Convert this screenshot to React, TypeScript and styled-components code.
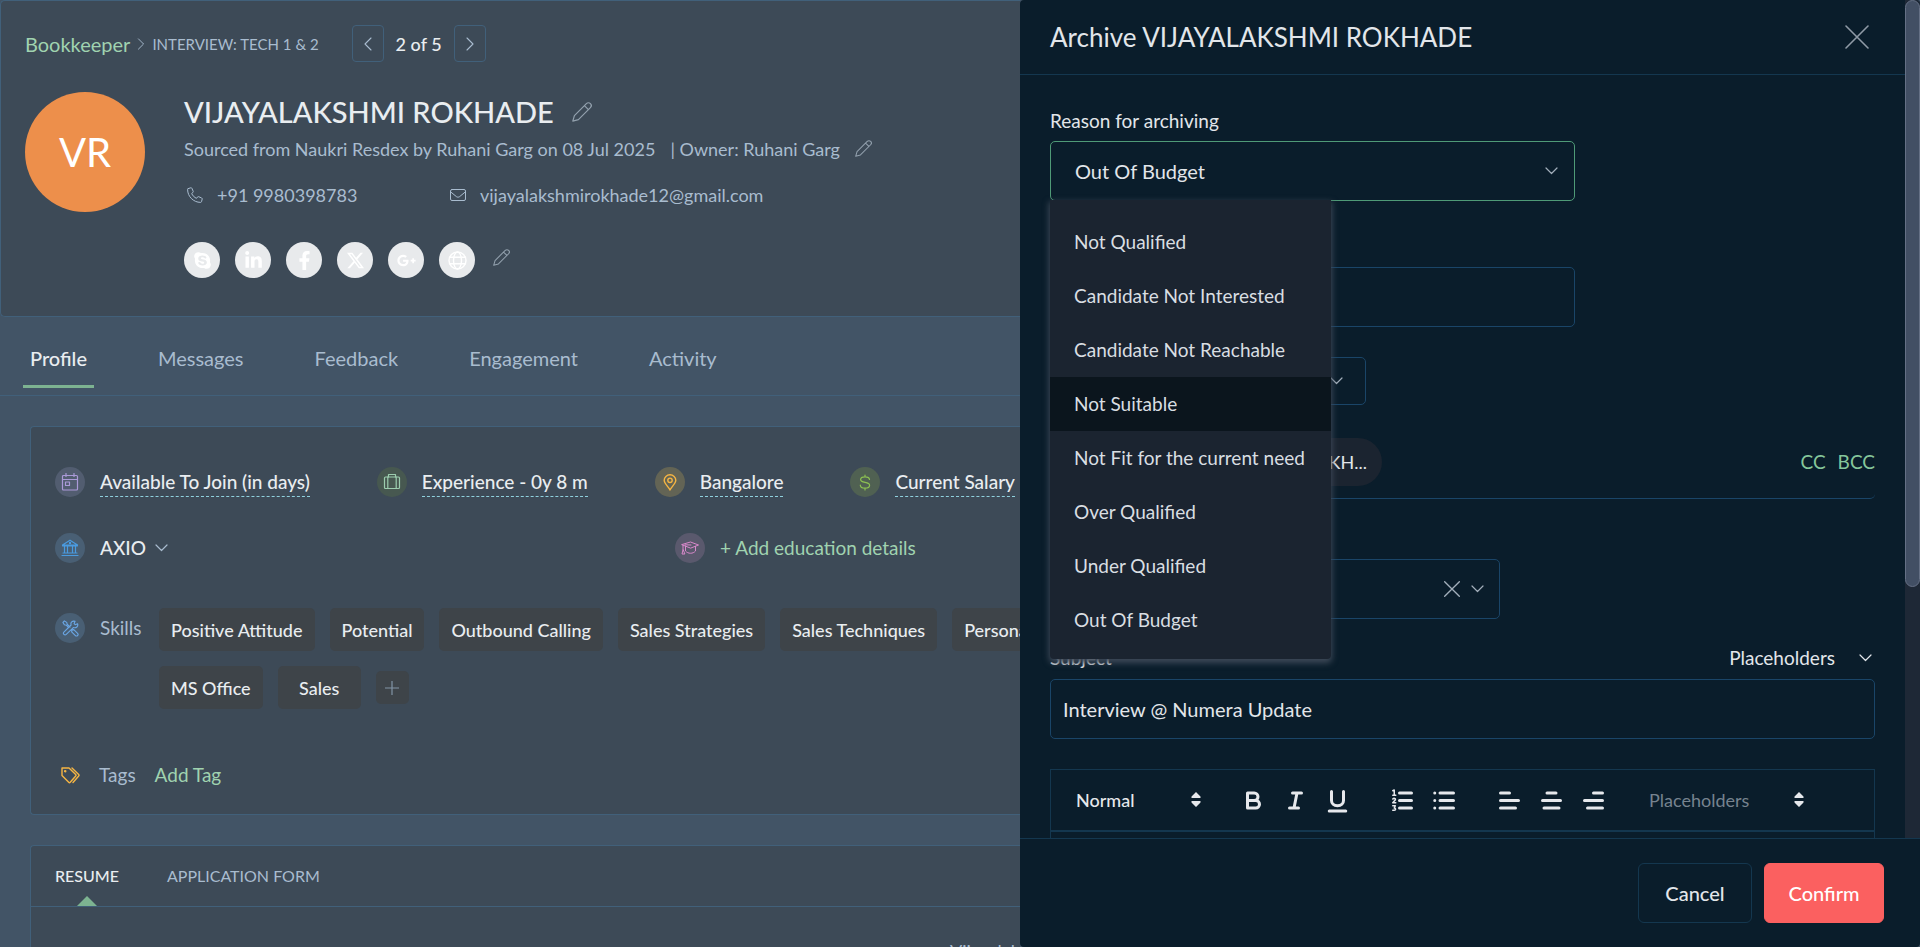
import React from "react";
import styled, { createGlobalStyle } from "styled-components";
import { FaSkype, FaLinkedinIn, FaFacebookF, FaGooglePlusG } from "react-icons/fa";
import { FaXTwitter } from "react-icons/fa6";

const color = {
  page: "#425466",
  card: "#3d4a57",
  cardLine: "#41607a",
  muted: "#a9bccf",
  bright: "#e9edf0",
  green: "#a0d3b0",
  accent: "#7db391",
  drawer: "#0a1d2b",
  drawerLine: "#14374f",
  field: "#1a4568",
};

const Global = createGlobalStyle`
  * { box-sizing: border-box; }
  body {
    margin: 0;
    background: ${color.page};
    color: ${color.bright};
    font-family: Lato, "Liberation Sans", sans-serif;
    font-size: 18px;
    line-height: 24px;
  }
  button, input, select { font: inherit; color: inherit; }
  button { background: none; border: 0; padding: 0; cursor: pointer; }
  h1, h2, ul, p { margin: 0; padding: 0; font-weight: inherit; }
  ul { list-style: none; }
  a { color: inherit; text-decoration: none; }
  svg { display: block; flex: none; }
`;

const Screen = styled.div`
  display: flex;
  height: 100vh;
  overflow: hidden;
`;

const Profile = styled.main`
  flex: 1;
  min-width: 0;
  overflow: hidden;
  white-space: nowrap;
`;

/* ---- Candidate header ---- */

const HeaderCard = styled.header`
  height: 317px;
  padding: 24px;
  background: ${color.card};
  border: 1px solid ${color.cardLine};
  border-right: 0;
  border-radius: 5px 0 0 5px;
`;

const Crumbs = styled.nav`
  display: flex;
  align-items: center;
  height: 37px;
  gap: 7px;
  color: ${color.muted};
`;

const JobLink = styled.a`
  font-size: 20px;
  color: ${color.green};
`;

const Stage = styled.span`
  font-size: 15px;
`;

const Pager = styled.div`
  display: flex;
  align-items: center;
  gap: 12px;
  margin-left: 26px;
  font-weight: 500;
  color: ${color.bright};
`;

const PagerButton = styled.button`
  display: grid;
  place-items: center;
  width: 32px;
  height: 37px;
  border: 1px solid ${color.cardLine};
  border-radius: 4px;
  color: ${color.muted};
`;

const Identity = styled.div`
  display: flex;
  gap: 39px;
  margin-top: 30px;
`;

const Avatar = styled.div`
  display: grid;
  place-items: center;
  flex: none;
  width: 120px;
  height: 120px;
  border-radius: 50%;
  background: #ed8f4b;
  color: #fff;
  font-size: 40px;
`;

const Name = styled.h1`
  display: flex;
  align-items: center;
  gap: 18px;
  height: 40px;
  font-size: 29px;
  font-weight: 500;
`;

const Source = styled.div`
  display: flex;
  align-items: center;
  gap: 15px;
  height: 33px;
  color: ${color.muted};
`;

const Contacts = styled.div`
  display: flex;
  align-items: center;
  height: 60px;
  color: ${color.muted};
`;

const Contact = styled.a`
  display: flex;
  align-items: center;
  gap: 14px;
  min-width: 263px;
  padding-left: 3px;
`;

const Socials = styled.div`
  display: flex;
  gap: 15px;
  margin-top: 17px;
`;

const Social = styled.a`
  display: grid;
  place-items: center;
  width: 36px;
  height: 36px;
  border-radius: 50%;
  background: #e8eaec;
  color: #fff;
  font-size: 19px;
`;

const EditButton = styled.button`
  color: #93a1ae;
`;

const EditLinks = styled(EditButton)`
  padding: 0 3px 6px;
`;

/* ---- Tabs ---- */

const Tabs = styled.nav`
  display: flex;
  gap: 57px;
  height: 79px;
  padding: 24px 23px 7px;
  border-bottom: 1px solid ${color.cardLine};
`;

const Tab = styled.a<{ $active?: boolean }>`
  padding: 5px 7px 0;
  font-size: 20px;
  font-weight: ${(p) => (p.$active ? 500 : 400)};
  color: ${(p) => (p.$active ? color.bright : color.muted)};
  border-bottom: 3px solid ${(p) => (p.$active ? color.accent : "transparent")};
`;

/* ---- Summary card ---- */

const Card = styled.section`
  margin: 30px 0 0 30px;
  background: ${color.card};
  border: 1px solid ${color.cardLine};
  border-right: 0;
  border-radius: 4px 0 0 4px;
`;

const Summary = styled(Card)`
  height: 389px;
  padding: 40px 0 0 24px;
`;

const FactRow = styled.div`
  display: flex;
  gap: 67px;
`;

const Fact = styled.div`
  display: flex;
  align-items: center;
  gap: 15px;
  height: 30px;
`;

const Bubble = styled.span<{ $bg: string; $fg: string }>`
  display: grid;
  place-items: center;
  flex: none;
  width: 30px;
  height: 30px;
  border-radius: 50%;
  background: ${(p) => p.$bg};
  color: ${(p) => p.$fg};
`;

const Editable = styled.button`
  height: 30px;
  font-size: 19px;
  font-weight: 500;
  border-bottom: 1px dashed #8fd0dd;
`;

const Background = styled.div`
  display: grid;
  grid-template-columns: 620px auto;
  margin-top: 36px;
`;

const Company = styled.button`
  display: flex;
  align-items: center;
  gap: 9px;
  font-size: 19px;
  font-weight: 500;
  svg { color: ${color.muted}; }
`;

const GreenButton = styled.button`
  font-size: 19px;
  color: ${color.green};
`;

const Skills = styled.div`
  display: flex;
  gap: 15px;
  margin-top: 45px;
`;

const SkillsLabel = styled.div`
  display: flex;
  flex: none;
  align-items: center;
  gap: 15px;
  width: 89px;
  height: 40px;
  font-size: 19px;
  color: ${color.muted};
`;

const ChipRows = styled.div`
  display: grid;
  gap: 15px;
`;

const ChipRow = styled.div`
  display: flex;
  align-items: center;
  gap: 15px;
`;

const Chip = styled.span`
  min-width: 83px;
  height: 43px;
  padding: 10px 12px 9px;
  border-radius: 5px;
  background: #3e4449;
  font-weight: 500;
  text-align: center;
`;

const AddChip = styled.button`
  display: grid;
  place-items: center;
  width: 33px;
  height: 33px;
  border-radius: 5px;
  background: #3e4449;
  color: #8193a5;
`;

const Tags = styled.div`
  display: flex;
  align-items: center;
  gap: 19px;
  margin-top: 54px;
  padding-left: 6px;
  font-size: 19px;
  color: ${color.muted};
  > svg { color: #f5b544; }
`;

/* ---- Resume card ---- */

const ResumeTabs = styled.nav`
  display: flex;
  gap: 48px;
  height: 61px;
  padding: 18px 24px 0;
  font-size: 16px;
  border-bottom: 1px solid ${color.cardLine};
`;

const ResumeTab = styled.a<{ $active?: boolean }>`
  display: flex;
  flex-direction: column;
  align-items: center;
  justify-content: space-between;
  font-weight: ${(p) => (p.$active ? 500 : 400)};
  color: ${(p) => (p.$active ? color.bright : color.muted)};
`;

const Marker = styled.i`
  border: 10px solid transparent;
  border-top: 0;
  border-bottom-color: ${color.accent};
`;

const ResumeText = styled.p`
  height: 80px;
  padding: 32px 0 0 919px;
  color: ${color.muted};
`;

/* ---- Drawer ---- */

const Drawer = styled.aside`
  display: flex;
  flex-direction: column;
  flex: none;
  width: 900px;
  height: 100%;
  overflow: hidden;
  border-radius: 4px;
  background: ${color.drawer};
  color: #e2e6ea;
`;

const Upper = styled.div`
  display: flex;
  flex: 1;
  min-height: 0;
`;

const Scroller = styled.div`
  flex: 1;
  min-width: 0;
  overflow: hidden;
`;

const Track = styled.div`
  width: 15px;
  background: #1e2836;
`;

const Thumb = styled.div`
  height: 70%;
  border: 1px solid #657085;
  border-radius: 8px;
  background: #424f64;
`;

const DrawerHead = styled.div`
  display: flex;
  align-items: center;
  justify-content: space-between;
  height: 75px;
  padding: 0 36px 0 30px;
  border-bottom: 1px solid ${color.drawerLine};
`;

const Title = styled.h2`
  font-size: 26px;
  line-height: 36px;
`;

const CloseButton = styled.button`
  color: #8f9aa6;
`;

const Form = styled.form`
  display: flex;
  flex-direction: column;
  padding: 34px 30px 0;
`;

const Label = styled.label`
  display: block;
  height: 32px;
  font-size: 19px;
`;

const SelectBox = styled.div<{ $w: number; $h: number; $pad?: number; $focus?: boolean }>`
  display: flex;
  align-items: center;
  gap: 11px;
  position: relative;
  width: ${(p) => p.$w}px;
  height: ${(p) => p.$h}px;
  padding: 0 ${(p) => p.$pad ?? 16}px 0 24px;
  border: 1px solid ${(p) => (p.$focus ? "#4f9a77" : color.field)};
  border-radius: 5px;
  color: #a3afbb;
`;

const Select = styled.select`
  flex: 1;
  min-width: 0;
  height: 100%;
  appearance: none;
  border: 0;
  outline: 0;
  padding: 0;
  background: none;
  color: #e2e6ea;
  font-size: 20px;
`;

const Menu = styled.ul`
  position: absolute;
  z-index: 2;
  top: 100%;
  left: -1px;
  width: 281px;
  padding: 15px 0 12px;
  border-radius: 0 0 4px 4px;
  background: #1b2430;
  box-shadow: 0 3px 6px 1px #3f4a59;
`;

const Option = styled.li<{ $hover?: boolean }>`
  height: 54px;
  padding: 15px 24px;
  color: #d9dee2;
  font-size: 19px;
  background: ${(p) => (p.$hover ? "#0b151d" : "none")};
`;

const TextBox = styled.input<{ $wide?: boolean }>`
  width: ${(p) => (p.$wide ? "100%" : "525px")};
  height: 60px;
  padding: 0 12px;
  border: 1px solid ${color.field};
  border-radius: 5px;
  outline: 0;
  background: none;
  font-size: 20px;
`;

const CommentBox = styled(TextBox)`
  margin: 66px 0 30px;
`;

const Recipients = styled.div`
  display: flex;
  align-items: flex-start;
  gap: 12px;
  height: 65px;
  margin: 29px 0 60px;
  padding-top: 4px;
  border-bottom: 1px solid ${color.field};
  border-radius: 5px;
`;

const RecipientList = styled.div`
  display: flex;
  justify-content: flex-end;
  width: 332px;
  margin-right: auto;
`;

const Recipient = styled.span`
  height: 48px;
  padding: 12px 15px;
  border-radius: 24px;
  background: #1b2430;
`;

const CopyButton = styled.button`
  margin-top: 12px;
  font-size: 19px;
  color: #86c79b;
`;

const SubjectHead = styled.div`
  display: flex;
  justify-content: space-between;
  height: 33px;
  margin-top: 27px;
  font-size: 19px;
`;

const PlaceholderMenu = styled.button`
  display: flex;
  align-items: center;
  gap: 24px;
  height: 24px;
  padding-right: 3px;
`;

const Editor = styled.div`
  height: 180px;
  margin-top: 30px;
  border: 1px solid ${color.drawerLine};
`;

const Toolbar = styled.div`
  display: flex;
  align-items: center;
  height: 62px;
  padding-left: 25px;
  border-bottom: 2px solid ${color.drawerLine};
  color: #e6e8ec;
`;

const Picker = styled.button<{ $w: number; $muted?: boolean }>`
  display: flex;
  align-items: center;
  justify-content: space-between;
  width: ${(p) => p.$w}px;
  font-weight: ${(p) => (p.$muted ? 400 : 500)};
  span { color: ${(p) => (p.$muted ? "#76838f" : "inherit")}; }
`;

const Tools = styled.div`
  display: flex;
  margin-left: 31px;
`;

const ToolsNext = styled(Tools)`
  margin-left: 23px;
`;

const Tool = styled.button`
  display: grid;
  place-items: center;
  width: 42px;
  height: 36px;
`;

const PickerSpace = styled.div`
  margin-left: 35px;
`;

const Footer = styled.footer`
  display: flex;
  justify-content: flex-end;
  gap: 12px;
  height: 109px;
  padding: 24px 36px;
  border-top: 1px solid ${color.drawerLine};
`;

const Action = styled.button<{ $primary?: boolean }>`
  width: ${(p) => (p.$primary ? 120 : 114)}px;
  height: 60px;
  border: 1px solid ${(p) => (p.$primary ? "#fb6060" : color.drawerLine)};
  border-radius: 6px;
  background: ${(p) => (p.$primary ? "#fb6060" : "none")};
  color: ${(p) => (p.$primary ? "#fff" : "#e2e6ea")};
  font-size: 20px;
  font-weight: 500;
`;

/* ---- Icons ---- */

type IconProps = { w: number; h?: number; box: string; sw?: number; children: React.ReactNode };
const Icon = ({ w, h = w, box, sw = 1, children }: IconProps) => (
  <svg width={w} height={h} viewBox={box} fill="none" stroke="currentColor" strokeWidth={sw} strokeLinecap="round" strokeLinejoin="round" aria-hidden="true">
    {children}
  </svg>
);

const Chevron = ({ dir = "down", size = 13 }: { dir?: "down" | "left" | "right"; size?: number }) => {
  if (dir === "down")
    return <Icon w={size} h={8} box="0 0 13 8" sw={1.2}><path d="M1 1l5.5 5.5L12 1" /></Icon>;
  return (
    <Icon w={8} h={size} box="0 0 8 14" sw={1.1}>
      <path d={dir === "left" ? "M7 1L1 7l6 6" : "M1 1l6 6-6 6"} />
    </Icon>
  );
};

const Cross = ({ size, sw }: { size: number; sw: number }) => (
  <Icon w={size} box="0 0 24 24" sw={sw}><path d="M1 1l22 22M23 1L1 23" /></Icon>
);

const Pencil = ({ size = 17 }: { size?: number }) => (
  <Icon w={size} box="0 0 20 20" sw={1.2}>
    <path d="M.8 19.2l1.6-5.6L14.4 1.6a2.8 2.8 0 0 1 4 4L6.4 17.6zM12.4 3.6l4 4" />
  </Icon>
);

const PhoneIcon = () => (
  <Icon w={16} box="0 0 16 16" sw={1}>
    <path d="M1.2 1.6L3.8.8c.5-.1.9 0 1.1.5l1.3 3c.2.4.1.8-.2 1.1L4.6 6.6a10.500 10.500 0 0 0 4.800 4.800l1.200-1.500c.3-.3.7-.4 1.100-.2l3 1.300c.4.2.6.6.5 1.100l-.7 2.600c-.1.4-.5.7-.9.7C6.500 15.400.6 9.500.6 2.500c0-.4.2-.8.6-.9z" />
  </Icon>
);

const MailIcon = () => (
  <Icon w={16} h={12} box="0 0 16 12" sw={1}>
    <rect x=".5" y=".5" width="15" height="11" rx="1.5" />
    <path d="M1 3.200l5.500 4.500c.9.600 2.100.600 3 0L15 3.200" />
  </Icon>
);

const GlobeIcon = () => (
  <Icon w={19} box="0 0 19 19" sw={1.4}>
    <circle cx="9.5" cy="9.5" r="8.5" />
    <ellipse cx="9.5" cy="9.5" rx="4" ry="8.5" />
    <path d="M1.500 6.300h16M1.500 12.700h16" />
  </Icon>
);

const CalendarIcon = () => (
  <Icon w={18} box="0 0 18 18" sw={1.2}>
    <rect x="1.5" y="2.5" width="15" height="14.5" rx="1" />
    <path d="M1.500 6.500h15M5 .5v3M13 .5v3" />
    <rect x="4.5" y="9" width="4" height="3.5" />
  </Icon>
);

const CaseIcon = () => (
  <Icon w={18} box="0 0 18 18" sw={1.2}>
    <rect x="1.5" y="4" width="15" height="11.5" rx="1" />
    <path d="M4.800 4v11.500M13.200 4v11.500M5.500 4V1.500h7V4" />
  </Icon>
);

const PinIcon = () => (
  <Icon w={14} h={17} box="0 0 14 17" sw={1.4}>
    <path d="M7 16C5.300 12.600 1.200 9.500 1.200 6.300a5.800 5.500 0 0 1 11.600 0C12.800 9.500 8.700 12.600 7 16z" />
    <circle cx="7" cy="6.3" r="2.2" />
  </Icon>
);

const DollarIcon = () => (
  <Icon w={12} h={17} box="0 0 12 17" sw={1.2}>
    <path d="M10.500 5.500C10.300 3.700 8.500 2.800 6 2.800S1.600 3.800 1.600 5.600c0 4.200 9 1.500 9 5.700 0 1.800-1.900 2.900-4.600 2.900s-4.600-1-4.700-3M6 1v1.800M6 14.200V16" />
  </Icon>
);

const BankIcon = () => (
  <Icon w={18} box="0 0 18 18" sw={1.2}>
    <path d="M1.500 6L9 1.200 16.500 6zM1.500 6.800h15M3.500 7v6M6.500 7v6M11.500 7v6M14.500 7v6M2 14h14M1 16.500h16" />
    <circle cx="9" cy="4" r=".6" />
  </Icon>
);

const CapIcon = () => (
  <Icon w={18} h={15} box="0 0 18 15" sw={1}>
    <path d="M1 3.500L9.500 1 17.500 4l-7.500 3zM4.500 5v5c2.500 3 7.500 3 10 0V5.300M2 4v5M2 9l-1 4h2.500zM4 3.800l6 .2" />
  </Icon>
);

const ToolsIcon = () => (
  <Icon w={17} box="0 0 18 18" sw={1.2}>
    <path d="M1 2.500L2.500 1l2.500 1.500.5 2 3 3M11 10.500l1.500-.3 4 4c1.500 1.500-.8 3.800-2.300 2.300l-4-4 .3-1.500zM16.500 4l-2.500 1-1.200-1.200 1-2.500c-3-.8-5 1.500-4.200 4L2 12.800c-1.500 1.600.8 4 2.500 2.500L12 8c3 .8 5.500-1 4.500-4zM1 2.500l1.500 2.500 2 .5L7 8" />
  </Icon>
);

const TagsIcon = () => (
  <Icon w={19} h={17} box="0 0 19 17" sw={1.4}>
    <path d="M1 1h7l6.700 6.500c.5.500.5 1 0 1.500l-5.500 6.300c-.5.500-1 .5-1.500 0L1 8.500zM11 1l6.700 6.500c.5.500.5 1 0 1.500l-5.700 6.500" />
    <circle cx="4.2" cy="4.2" r=".6" />
  </Icon>
);

const UpDown = () => (
  <svg width="10" height="16" viewBox="0 0 10 16" fill="currentColor" aria-hidden="true">
    <path d="M5 0l4.500 4.500V6H.5V4.500zM5 15L.5 10.500V9h9v1.500z" />
  </svg>
);

const ToolIcon = ({ children }: { children: React.ReactNode }) => (
  <Icon w={27} box="0 0 18 18" sw={2}>{children}</Icon>
);

const lists = [
  {
    name: "Numbered list",
    art: (
      <>
        <path d="M7 4h8M7 9h8M7 14h8" />
        <g strokeWidth="1">
          <path d="M2.500 2.500l1-.5v3.500M2.500 5.500h2M2.500 8c.8-.8 2-.3 1.800.5L2.500 10.500h2M2.500 12.500h1.700L3.500 14c1.200.1 1.200 1.500 0 1.500h-1" />
        </g>
      </>
    ),
  },
  { name: "Bulleted list", art: <path d="M6 4h9M6 9h9M6 14h9M2.500 4h0M2.500 9h0M2.500 14h0" /> },
];

const aligns = [
  { name: "Align left", d: "M3 4h6M3 9h12M3 14h10" },
  { name: "Align center", d: "M6 4h6M3 9h12M4 14h10" },
  { name: "Align right", d: "M9 4h6M3 9h12M5 14h10" },
];

const facts = [
  { text: "Available To Join (in days)", bg: "#525d70", fg: "#ab9ad8", icon: <CalendarIcon /> },
  { text: "Experience - 0y 8 m", bg: "#475850", fg: "#9ccdae", icon: <CaseIcon /> },
  { text: "Bangalore", bg: "#636455", fg: "#f5b544", icon: <PinIcon /> },
  { text: "Current Salary", bg: "#506152", fg: "#8cc152", icon: <DollarIcon /> },
];

const skills = [
  ["Positive Attitude", "Potential", "Outbound Calling", "Sales Strategies", "Sales Techniques", "Personality"],
  ["MS Office", "Sales"],
];

const reasons = [
  "Not Qualified",
  "Candidate Not Interested",
  "Candidate Not Reachable",
  "Not Suitable",
  "Not Fit for the current need",
  "Over Qualified",
  "Under Qualified",
  "Out Of Budget",
];

const socials = [
  { name: "Skype", icon: <FaSkype /> },
  { name: "LinkedIn", icon: <FaLinkedinIn /> },
  { name: "Facebook", icon: <FaFacebookF /> },
  { name: "X", icon: <FaXTwitter /> },
  { name: "Google Plus", icon: <FaGooglePlusG /> },
  { name: "Website", icon: <GlobeIcon /> },
];

function CandidateProfile() {
  return (
    <Profile>
      <HeaderCard>
        <Crumbs>
          <JobLink href="#job">Bookkeeper</JobLink>
          <Chevron dir="right" size={12} />
          <Stage>INTERVIEW: TECH 1 &amp; 2</Stage>
          <Pager>
            <PagerButton aria-label="Previous"><Chevron dir="left" size={14} /></PagerButton>
            2 of 5
            <PagerButton aria-label="Next"><Chevron dir="right" size={14} /></PagerButton>
          </Pager>
        </Crumbs>
        <Identity>
          <Avatar>VR</Avatar>
          <div>
            <Name>
              VIJAYALAKSHMI ROKHADE
              <EditButton aria-label="Edit name"><Pencil size={20} /></EditButton>
            </Name>
            <Source>
              <span>Sourced from Naukri Resdex by Ruhani Garg on 08 Jul 2025</span>
              <span>| Owner: Ruhani Garg</span>
              <EditButton aria-label="Edit owner"><Pencil /></EditButton>
            </Source>
            <Contacts>
              <Contact href="tel:+919980398783"><PhoneIcon />+91 9980398783</Contact>
              <Contact href="mailto:vijayalakshmirokhade12@gmail.com"><MailIcon />vijayalakshmirokhade12@gmail.com</Contact>
            </Contacts>
            <Socials>
              {socials.map((s) => (
                <Social key={s.name} href="#social" aria-label={s.name}>{s.icon}</Social>
              ))}
              <EditLinks aria-label="Edit links"><Pencil /></EditLinks>
            </Socials>
          </div>
        </Identity>
      </HeaderCard>

      <Tabs>
        {["Profile", "Messages", "Feedback", "Engagement", "Activity"].map((t, i) => (
          <Tab key={t} href={"#" + t.toLowerCase()} $active={i === 0}>{t}</Tab>
        ))}
      </Tabs>

      <Summary>
        <FactRow>
          {facts.map((f) => (
            <Fact key={f.text}>
              <Bubble $bg={f.bg} $fg={f.fg}>{f.icon}</Bubble>
              <Editable>{f.text}</Editable>
            </Fact>
          ))}
        </FactRow>
        <Background>
          <Fact>
            <Bubble $bg="#495f74" $fg="#4a9be0"><BankIcon /></Bubble>
            <Company>AXIO<Chevron /></Company>
          </Fact>
          <Fact>
            <Bubble $bg="#5a596d" $fg="#d989cb"><CapIcon /></Bubble>
            <GreenButton>+ Add education details</GreenButton>
          </Fact>
        </Background>
        <Skills>
          <SkillsLabel>
            <Bubble $bg="#495f74" $fg="#6aa6e4"><ToolsIcon /></Bubble>
            Skills
          </SkillsLabel>
          <ChipRows>
            {skills.map((row, i) => (
              <ChipRow key={i}>
                {row.map((s) => <Chip key={s}>{s}</Chip>)}
                {i === skills.length - 1 && (
                  <AddChip aria-label="Add skill">
                    <Icon w={14} box="0 0 14 14" sw={1.2}><path d="M7 0v14M0 7h14" /></Icon>
                  </AddChip>
                )}
              </ChipRow>
            ))}
          </ChipRows>
        </Skills>
        <Tags>
          <TagsIcon />
          <span>Tags</span>
          <GreenButton>Add Tag</GreenButton>
        </Tags>
      </Summary>

      <Card>
        <ResumeTabs>
          <ResumeTab href="#resume" $active>RESUME<Marker /></ResumeTab>
          <ResumeTab href="#application">APPLICATION FORM</ResumeTab>
        </ResumeTabs>
        <ResumeText>Vijayalakshmi</ResumeText>
      </Card>
    </Profile>
  );
}

function ArchiveDrawer() {
  return (
    <Drawer aria-label="Archive candidate">
      <Upper>
        <Scroller>
          <DrawerHead>
            <Title>Archive VIJAYALAKSHMI ROKHADE</Title>
            <CloseButton aria-label="Close"><Cross size={24} sw={1.6} /></CloseButton>
          </DrawerHead>
          <Form>
            <Label htmlFor="reason">Reason for archiving</Label>
            <SelectBox $w={525} $h={60} $focus>
              <Select id="reason" defaultValue="Out Of Budget">
                {reasons.map((r) => <option key={r}>{r}</option>)}
              </Select>
              <Chevron />
              <Menu role="listbox" aria-label="Reasons">
                {reasons.map((r) => (
                  <Option key={r} role="option" $hover={r === "Not Suitable"}>{r}</Option>
                ))}
              </Menu>
            </SelectBox>
            <CommentBox aria-label="Comments" />
            <SelectBox $w={316} $h={48} $pad={22}>
              <Select aria-label="Send mail" />
              <Chevron />
            </SelectBox>
            <Recipients>
              <RecipientList><Recipient>VIJAYALAKSHMI ROKH...</Recipient></RecipientList>
              <CopyButton type="button">CC</CopyButton>
              <CopyButton type="button">BCC</CopyButton>
            </Recipients>
            <SelectBox $w={450} $h={60} $pad={15}>
              <Select aria-label="Template" />
              <Cross size={16} sw={2} />
              <Chevron />
            </SelectBox>
            <SubjectHead>
              <label htmlFor="subject">Subject</label>
              <PlaceholderMenu type="button">Placeholders<Chevron /></PlaceholderMenu>
            </SubjectHead>
            <TextBox id="subject" $wide defaultValue="Interview @ Numera Update" />
            <Editor>
              <Toolbar>
                <Picker type="button" $w={125}><span>Normal</span><UpDown /></Picker>
                <Tools>
                  <Tool type="button" aria-label="Bold">
                    <ToolIcon><path d="M5 4h4.500a2.500 2.500 0 0 1 0 5H5zM5 9h5.500a2.500 2.500 0 0 1 0 5H5z" /></ToolIcon>
                  </Tool>
                  <Tool type="button" aria-label="Italic">
                    <ToolIcon><path d="M7 4h6M5 14h6M8 14l2-10" /></ToolIcon>
                  </Tool>
                  <Tool type="button" aria-label="Underline">
                    <ToolIcon><path d="M5 3v6c0 2 1.500 3.500 4 3.500s4-1.500 4-3.500V3M3.500 16h11" /></ToolIcon>
                  </Tool>
                </Tools>
                <ToolsNext>
                  {lists.map((l) => (
                    <Tool key={l.name} type="button" aria-label={l.name}><ToolIcon>{l.art}</ToolIcon></Tool>
                  ))}
                </ToolsNext>
                <ToolsNext>
                  {aligns.map((a) => (
                    <Tool key={a.name} type="button" aria-label={a.name}><ToolIcon><path d={a.d} /></ToolIcon></Tool>
                  ))}
                </ToolsNext>
                <PickerSpace>
                  <Picker type="button" $w={155} $muted><span>Placeholders</span><UpDown /></Picker>
                </PickerSpace>
              </Toolbar>
            </Editor>
          </Form>
        </Scroller>
        <Track><Thumb /></Track>
      </Upper>
      <Footer>
        <Action type="button">Cancel</Action>
        <Action type="button" $primary>Confirm</Action>
      </Footer>
    </Drawer>
  );
}

export default function App() {
  return (
    <Screen>
      <Global />
      <CandidateProfile />
      <ArchiveDrawer />
    </Screen>
  );
}
